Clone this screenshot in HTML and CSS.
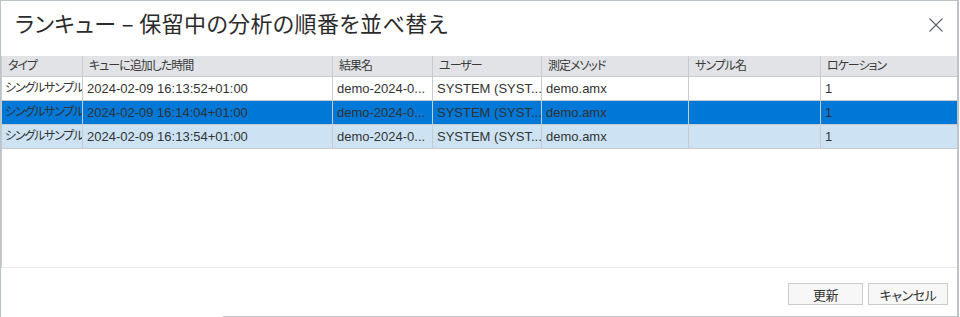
FILE: index.html
```html
<!DOCTYPE html>
<html lang="ja">
<head>
    <meta charset="UTF-8">
    <title>ランキュー</title>
    <link rel="stylesheet" href="styles.css">
</head>
<body>
    <div class="dialog">
        <div class="dialog-header">
            <h1>ランキュー – 保留中の分析の順番を並べ替え</h1>
            <button class="close-btn" title="閉じる">
                <svg width="14" height="14" viewBox="0 0 14 14">
                    <path d="M0.5 0.5 L13.5 13.5 M13.5 0.5 L0.5 13.5" stroke="#5f6368" stroke-width="1.1" fill="none"/>
                </svg>
            </button>
        </div>

        <div class="queue-grid">
            <div class="grid-row head">
                <div class="cell">タイプ</div>
                <div class="cell">キューに追加した時間</div>
                <div class="cell">結果名</div>
                <div class="cell">ユーザー</div>
                <div class="cell">測定メソッド</div>
                <div class="cell">サンプル名</div>
                <div class="cell">ロケーション</div>
            </div>
            <div class="grid-row">
                <div class="cell first">シングルサンプル</div>
                <div class="cell">2024-02-09 16:13:52+01:00</div>
                <div class="cell">demo-2024-0...</div>
                <div class="cell">SYSTEM (SYST...</div>
                <div class="cell">demo.amx</div>
                <div class="cell"></div>
                <div class="cell">1</div>
            </div>
            <div class="grid-row selected">
                <div class="cell first">シングルサンプル</div>
                <div class="cell">2024-02-09 16:14:04+01:00</div>
                <div class="cell">demo-2024-0...</div>
                <div class="cell">SYSTEM (SYST...</div>
                <div class="cell">demo.amx</div>
                <div class="cell"></div>
                <div class="cell">1</div>
            </div>
            <div class="grid-row marked">
                <div class="cell first">シングルサンプル</div>
                <div class="cell">2024-02-09 16:13:54+01:00</div>
                <div class="cell">demo-2024-0...</div>
                <div class="cell">SYSTEM (SYST...</div>
                <div class="cell">demo.amx</div>
                <div class="cell"></div>
                <div class="cell">1</div>
            </div>
        </div>

        <div class="dialog-footer">
            <button class="btn">更新</button>
            <button class="btn">キャンセル</button>
        </div>
        <div class="bottom-edge"></div>
    </div>
</body>
</html>
```

FILE: styles.css
```css
* {
    margin: 0;
    padding: 0;
    box-sizing: border-box;
}

body {
    font-family: "Liberation Sans", "Noto Sans CJK JP", sans-serif;
    font-feature-settings: "palt";
    background: white;
    color: #333;
    width: 960px;
    height: 317px;
    overflow: hidden;
}

.dialog {
    width: 959px;
    height: 317px;
    display: flex;
    flex-direction: column;
    border-top: 1px solid #bcc4c8;
    border-left: 1px solid #bcc4c8;
    border-right: 2px solid #bcc4c8;
}

.dialog-header {
    height: 55px;
    display: flex;
    justify-content: space-between;
    align-items: flex-start;
    padding: 7px 14px 0 14px;
}

.dialog-header h1 {
    font-family: "Noto Sans CJK JP", sans-serif;
    font-size: 22px;
    font-weight: normal;
    line-height: 28px;
    letter-spacing: 0.4px;
    color: #2b2b2b;
}

.close-btn {
    border: none;
    background: none;
    width: 14px;
    height: 14px;
    margin-top: 10px;
    display: flex;
}

.queue-grid {
    flex: 1;
    border-left: 1px solid #c8cbce;
    border-bottom: 1px solid #e6e9eb;
}

.grid-row {
    display: grid;
    grid-template-columns: 81px 250px 100px 109px 147px 132px 136px;
    height: 24px;
}

.cell {
    border-right: 1px solid #c8cbce;
    border-bottom: 1px solid #c8cbce;
    padding: 0 4px;
    font-size: 13px;
    line-height: 23px;
    white-space: nowrap;
    overflow: hidden;
}

.cell:last-child {
    border-right: none;
}

.cell.first {
    padding: 0 0 0 3px;
    font-size: 12px;
    letter-spacing: -1.2px;
}

.grid-row.head {
    height: 21px;
    background: #e1e3e6;
}

.grid-row.head .cell {
    font-size: 12px;
    line-height: 20px;
    padding: 0 6px;
    letter-spacing: -1px;
    color: #3a3a3a;
}

.grid-row.selected {
    background: #0078d7;
}

.grid-row.marked {
    background: #cde3f3;
}

.dialog-footer {
    height: 48px;
    display: flex;
    justify-content: flex-end;
    align-items: flex-start;
    gap: 5px;
    padding: 15px 9px 0 0;
}

.btn {
    height: 22px;
    font-family: "Liberation Sans", "Noto Sans CJK JP", sans-serif;
    font-feature-settings: "palt";
    font-size: 13px;
    letter-spacing: -0.5px;
    color: #333;
    background: #f7f7f7;
    border: 1px solid #c9cccf;
}

.btn:first-child {
    width: 75px;
}

.btn:last-child {
    width: 80px;
}

.bottom-edge {
    height: 1px;
    margin-left: 222px;
    margin-right: -2px;
    background: #bcc4c8;
}
```
